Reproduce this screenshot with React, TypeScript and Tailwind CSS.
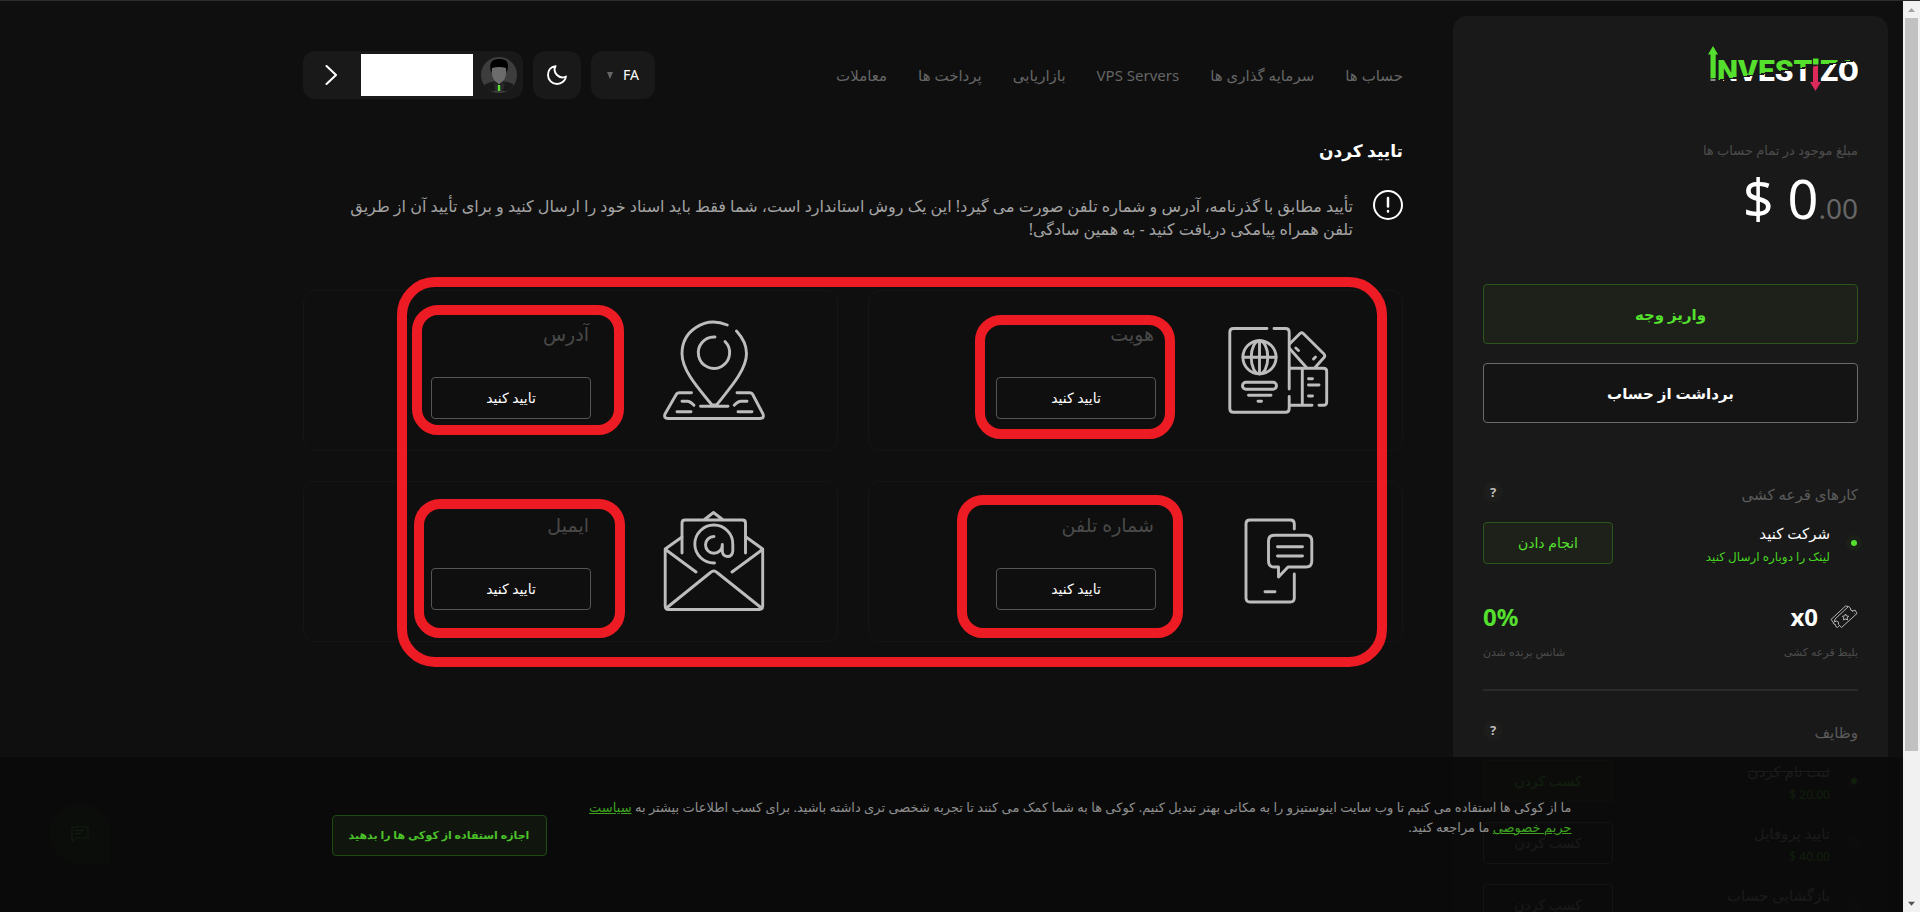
import type { ReactNode } from "react";

const navItems = ["حساب ها", "سرمایه گذاری ها", "VPS Servers", "بازاریابی", "پرداخت ها", "معاملات"];

const tasks = [
  { title: "ثبت نام کردن", reward: "$ 20.00", done: true },
  { title: "تایید پروفایل", reward: "$ 40.00", done: false },
  { title: "بازگشایی حساب", reward: "$ 20.00", done: false },
];

function Logo() {
  return (
    <svg width="150" height="46" viewBox="0 0 150 46" direction="ltr" role="img" aria-label="Investizo">
      <defs>
        <linearGradient id="logo-split" gradientUnits="userSpaceOnUse" x1="70" y1="24" x2="73.500" y2="48">
          <stop offset="0" stopColor="#55e02e" />
          <stop offset="0.040" stopColor="#55e02e" />
          <stop offset="0.040" stopColor="#191919" />
          <stop offset="0.100" stopColor="#191919" />
          <stop offset="0.100" stopColor="#fff" />
          <stop offset="1" stopColor="#fff" />
        </linearGradient>
      </defs>
      <g fontFamily="Roboto, sans-serif" fontWeight="900" fontSize="30" fill="url(#logo-split)">
        <text x="9" y="34.500">NVEST</text>
        <text x="112" y="34.500">ZO</text>
      </g>
      <path d="M105 12.500h5.500v6H105z" fill="#55e02e" />
      <path d="M2.500 33.500h5v1h-5z" fill="#fff" />
      <path d="M5 0L10 8.500H7.700V32L2.500 32.500V8.500H0Z" fill="#55e02e" />
      <path d="M105 20.500L110 19.500V36H113L107.500 45L102 36H105Z" fill="#dc2a5b" />
    </svg>
  );
}

function LineIcon({ children }: { children: ReactNode }) {
  return (
    <svg
      width="102"
      height="101"
      viewBox="0 0 102 101"
      fill="none"
      stroke="#bdbdbd"
      strokeWidth="2.900"
      strokeLinecap="round"
      strokeLinejoin="round"
      aria-hidden="true"
    >
      {children}
    </svg>
  );
}

function PassportIcon() {
  return (
    <LineIcon>
      <path d="M39 8.500H5.500Q1.800 8.500 1.800 12.200V88.500Q1.800 92.300 5.500 92.300H57.500Q61.200 92.300 61.200 88.500V76.500M61.200 69V12.200Q61.200 8.500 57.500 8.500H46" />
      <circle cx="31.500" cy="37.300" r="16.600" />
      <ellipse cx="31.500" cy="37.300" rx="8.300" ry="16.600" />
      <path d="M31.500 20.700V54M15 37.300H48" />
      <rect x="14.500" y="62.300" width="34" height="7" rx="3.500" />
      <path d="M20.500 75.200H43M30 81.200H33.500" />
      <path d="M62 23.500L72 13.500Q73.700 12 75.300 13.500L96 34Q97.500 36 96 37.500L87.500 47M62 29L78 47" />
      <path d="M67.800 28L70.500 30.500M85.500 39L87.500 37" />
      <path d="M62 48.300H95.500Q98.700 48.300 98.700 51.500V82Q98.700 85.300 95.500 85.300H91M84 85.300H62M74.300 48.300V85.300M80.500 58.700H84.500M80.500 65H91M80.500 76H84.500" />
    </LineIcon>
  );
}

function PinIcon() {
  return (
    <LineIcon>
      <path d="M64.300 5C41 -4.500 19 11.500 19 33.500C19 51 36 69 49 85H53.500C67 68 83.500 50 83.500 33.500C83.500 24 79 17 73.500 11" />
      <path d="M52 17A15.700 15.700 0 1 0 62 21.500" />
      <path d="M37.500 86.300H65M28.500 72.700H16.500Q14 72.700 12.900 75L2 94Q0.500 98.500 5 98.500H97Q101.500 98.500 100 94L90 75Q89 72.700 86.500 72.700H74" />
      <path d="M19 81.300H24.500Q27 81.300 31 85.300M71.200 85.300Q75 81.300 78 81.300H84M14 91.700H28M75 91.700H89" />
    </LineIcon>
  );
}

function PhoneIcon() {
  return (
    <LineIcon>
      <path d="M66.300 18V13Q66.300 9 62.300 9H22Q18 9 18 13V87Q18 91 22 91H62.300Q66.300 91 66.300 87V63" />
      <path d="M46.500 24.300H78Q83.800 24.300 83.800 30V50Q83.800 56 78 56H60L50.500 66V56H46.500Q40.500 56 40.500 50V30Q40.500 24.300 46.500 24.300Z" />
      <path d="M49.500 35.700H74.500M49.500 45H74.500M37 80.700H47" />
    </LineIcon>
  );
}

function MailIcon() {
  return (
    <LineIcon>
      <path d="M19 42V12Q19 9 22 9H79.500Q82.500 9 82.500 12V42M41.500 8.500L50.500 1.500L59.500 8.500" />
      <path d="M19 26L2.200 38V95Q2.200 98.500 5.500 98.500H96.500Q99.700 98.500 99.700 95V38L83 26" />
      <path d="M2.500 38.500L33 61M99.500 38.500L69 61M3.500 97L47.500 61.500Q50.800 58.500 54 61.500L98.500 97" />
      <path d="M51.500 52A19 19 0 1 1 69.800 33.500V40Q69.300 45.500 64.500 45.500Q59.500 45 59.300 40V33.500M51 25.500A8.400 8.400 0 1 0 59.300 34" />
    </LineIcon>
  );
}

function TicketIcon() {
  return (
    <svg width="28" height="24" viewBox="0 0 28 24" fill="none" stroke="#b5b5b5" strokeLinejoin="round" aria-hidden="true">
      <path d="M18.500 1.500L20.500 3Q20 6 23 6L25 5L27 8.500L11.500 22.500L8.500 19.500Q9.500 16.500 6.500 16L4.500 17L5 14Z" />
      <path d="M18.500 1.500L15.500 1L1 14.500L3 17Q3 19.500 5.500 19.500Q5 22 7.500 22.500L9 21" />
      <path d="M15.500 9L16.500 11L18.700 11.300L17.200 12.900L17.500 15L15.500 14L13.500 15L13.800 12.900L12.300 11.300L14.500 11Z" />
      <path d="M20.500 4.500L24.500 8.500" strokeDasharray="1 1.500" />
    </svg>
  );
}

function Avatar() {
  return (
    <svg width="36" height="36" viewBox="0 0 36 36" aria-hidden="true">
      <defs>
        <clipPath id="avatar-round">
          <circle cx="18" cy="18" r="18" />
        </clipPath>
      </defs>
      <g clipPath="url(#avatar-round)">
        <path d="M0 0h36v36H0z" fill="#3d3d3d" />
        <path d="M3 28Q8 25 12.500 24.500H24Q29 25 33 28V34H3Z" fill="#1a1a1a" />
        <path d="M12.500 24.500L18 29L24 24.500L22 34H14Z" fill="#292929" />
        <path d="M16.800 28h2.400v6h-2.400z" fill="#55e02e" />
        <path d="M9.500 13Q7.500 2 18 2Q29 1.500 26.500 13L25 16H11Z" fill="#000" />
        <path d="M11 11Q18 9 25 11Q26 20 22 24L18 27.500L14 24Q10 20 11 11Z" fill="#6c6c6c" />
      </g>
    </svg>
  );
}

function HelpButton() {
  return (
    <button type="button" className="h-5 w-5 rounded-full bg-[#1d1e1b] text-[13px] leading-5 font-bold text-[#bdbdbd]">
      ?
    </button>
  );
}

function Dot({ active }: { active?: boolean }) {
  return (
    <span className="-ms-1 flex h-4 w-4 items-center justify-center rounded-full bg-[#1b2119]">
      {active && <span className="h-1.5 w-1.5 rounded-full bg-[#55e02e]" />}
    </span>
  );
}

function Sidebar() {
  return (
    <aside className="mt-[15px] w-[435px] shrink-0 rounded-t-[14px] bg-[#191919] p-[30px]">
      <a href="#" className="block w-fit">
        <Logo />
      </a>
      <p className="mt-12 text-[13px] leading-5 text-[#4d4d4d]">مبلغ موجود در تمام حساب ها</p>
      <p dir="ltr" className="mt-2 text-right text-[54px] leading-[60px] text-white">
        $ 0<span className="text-[28px] leading-none text-[#666]">.00</span>
      </p>
      <div className="mt-14 flex flex-col gap-[19px]">
        <button type="button" className="h-[60px] rounded border border-[#2b571c] bg-[#1e211a] text-[15px] font-semibold text-[#55e02e]">
          واریز وجه
        </button>
        <button type="button" className="h-[60px] rounded border border-[#6b6b6b] bg-[#141414] text-[15px] font-semibold text-white">
          برداشت از حساب
        </button>
      </div>

      <div className="mt-[59px] flex h-[30px] items-start justify-between">
        <h2 className="text-[15px] leading-6 text-[#5c5c5c]">کارهای قرعه کشی</h2>
        <HelpButton />
      </div>
      <div className="mt-[10px] flex h-[42px] items-center">
        <Dot active />
        <div className="ms-4 flex-1 pt-1">
          <p className="text-[15px] leading-6 text-white">شرکت کنید</p>
          <a href="#" className="block text-xs leading-6 text-[#46d420]">لینک را دوباره ارسال کنید</a>
        </div>
        <button type="button" className="h-[42px] w-[130px] rounded border border-[#2b571c] bg-[#1e211a] text-sm text-[#55e02e]">
          انجام دادن
        </button>
      </div>

      <div className="mt-[38px] flex justify-between border-b-2 border-[#2a2a2a] pb-[27px]">
        <div>
          <p className="flex h-[30px] items-center gap-3 text-2xl font-bold text-white">
            <TicketIcon />
            <span dir="ltr">x0</span>
          </p>
          <p className="mt-[10px] text-[11px] leading-5 text-[#4d4d4d]">بلیط قرعه کشی</p>
        </div>
        <div className="text-end">
          <p dir="ltr" className="h-[30px] text-left text-2xl leading-[30px] font-bold text-[#55e02e]">0%</p>
          <p className="mt-[10px] text-[11px] leading-5 text-[#4d4d4d]">شانس برنده شدن</p>
        </div>
      </div>

      <div className="mt-[29px] flex h-[30px] items-start justify-between">
        <h2 className="text-[15px] leading-6 text-[#5c5c5c]">وظایف</h2>
        <HelpButton />
      </div>
      <ul className="mt-[10px] flex flex-col gap-5">
        {tasks.map((task) => (
          <li key={task.title} className="flex h-[42px] items-center">
            <Dot active={task.done} />
            <div className="ms-4 flex-1 pt-1">
              <p className={task.done ? "text-[15px] leading-6 text-[#aaa] line-through" : "text-[15px] leading-6 text-[#aaa]"}>
                {task.title}
              </p>
              <p dir="ltr" className="text-right text-xs leading-6 text-[#46d420]">{task.reward}</p>
            </div>
            <button
              type="button"
              className={
                task.done
                  ? "h-[42px] w-[130px] rounded border border-[#2b571c] bg-[#1e211a] text-sm text-[#55e02e]"
                  : "h-[42px] w-[130px] rounded border border-[#6b6b6b] bg-[#141414] text-sm text-[#aaa]"
              }
            >
              کسب کردن
            </button>
          </li>
        ))}
      </ul>
    </aside>
  );
}

function Header() {
  return (
    <header className="flex items-start justify-between">
      <nav className="flex gap-[31px] pt-3 text-[15px] leading-6">
        {navItems.map((item) => (
          <a key={item} href="#" className="text-[#666]">
            {item}
          </a>
        ))}
      </nav>
      <div className="flex gap-[10px]">
        <button type="button" className="flex h-12 w-16 items-center justify-center gap-[10px] rounded-xl bg-[#191919] text-sm text-white">
          FA
          <svg width="6" height="7" viewBox="0 0 6 7" fill="#666" aria-hidden="true">
            <path d="M0 0H6L3 7Z" />
          </svg>
        </button>
        <button type="button" aria-label="Dark mode" className="flex h-12 w-12 items-center justify-center rounded-xl bg-[#191919]">
          <svg width="20" height="20" viewBox="0 0 20 20" fill="none" stroke="#fff" strokeWidth="1.900" strokeLinejoin="round" aria-hidden="true">
            <path d="M8.500 1.200C3.500 1.700 1 5.500 1 10C1 15 5 19 10 19C14.500 19 18.500 15.500 19 11.500C16 13 12.500 12.500 10 10C7.500 7.500 7 4 8.500 1.200Z" />
          </svg>
        </button>
        <button type="button" aria-label="Account" className="flex h-12 w-[220px] items-center rounded-xl bg-[#191919] ps-[6px]">
          <Avatar />
          <span className="ms-2 h-[42px] w-28 bg-white" />
          <svg className="ms-6" width="12" height="20" viewBox="0 0 12 20" fill="none" stroke="#fff" strokeWidth="2" strokeLinecap="round" aria-hidden="true">
            <path d="M1.500 1L11 10L1.500 19" />
          </svg>
        </button>
      </div>
    </header>
  );
}

function VerifyCard({ title, icon, mark }: { title: string; icon: ReactNode; mark: string }) {
  return (
    <section className="relative flex h-[161px] rounded-xl border border-[#151515]">
      <div className="flex w-[246px] justify-center pt-[29px]">{icon}</div>
      <div className="pt-[29px]">
        <h3 className="ps-0.5 text-[19px] leading-7 text-[#4a4a4a]">{title}</h3>
        <button type="button" className="mt-[29px] h-[42px] w-40 rounded border border-[#555] text-sm text-white">
          تایید کنید
        </button>
      </div>
      <span className={`pointer-events-none absolute rounded-[26px] border-[10px] border-[#ed1c24] ${mark}`} />
    </section>
  );
}

function CookieBar() {
  return (
    <div className="absolute inset-x-0 bottom-0 flex h-[155px] justify-center bg-[#0a0a0a]/90">
      <div className="flex w-full max-w-[1240px] items-start justify-between">
        <p className="mt-10 w-[990px] text-[13px] leading-5 text-[#8f8f8f]">
          ما از کوکی ها استفاده می کنیم تا وب سایت اینوستیزو را به مکانی بهتر تبدیل کنیم. کوکی ها به شما کمک می کنند تا تجربه شخصی تری داشته باشید. برای کسب اطلاعات بیشتر به{" "}
          <a href="#" className="text-[#3da31f] underline">سیاست حریم خصوصی</a> ما مراجعه کنید.
        </p>
        <button type="button" className="mt-[58px] h-[41px] w-[215px] rounded border border-[#1f4a13] bg-[#10160d] text-[11px] font-semibold text-[#4cc22a]">
          اجازه استفاده از کوکی ها را بدهید
        </button>
      </div>
    </div>
  );
}

function Scrollbar() {
  return (
    <div className="flex w-[17px] flex-col items-center justify-between bg-[#f1f1f1]" aria-hidden="true">
      <div className="flex h-full flex-col items-center">
        <svg width="17" height="17" viewBox="0 0 17 17" fill="#a3a3a3">
          <path d="M5 11L8.500 7L12 11Z" />
        </svg>
        <div className="h-[82%] w-[13px] bg-[#c1c1c1]" />
      </div>
      <svg width="17" height="17" viewBox="0 0 17 17" fill="#505050">
        <path d="M5 7L8.500 11L12 7Z" />
      </svg>
    </div>
  );
}

export default function App() {
  return (
    <div className="flex h-screen overflow-hidden border-t border-[#2c2c2c] bg-[#0f0f0f] font-['Noto_Sans','DejaVu_Sans',sans-serif]">
      <div className="relative flex-1 overflow-hidden">
        <div dir="rtl" className="flex ps-[15px]">
          <Sidebar />
          <main className="ms-[50px] w-full max-w-[1100px] pt-[50px]">
            <Header />
            <h1 className="mt-9 text-[17px] leading-8 font-semibold text-white">تایید کردن</h1>
            <div className="mt-[23px] flex gap-5">
              <svg width="30" height="30" viewBox="0 0 30 30" fill="none" stroke="#fff" strokeWidth="2" strokeLinecap="round" className="shrink-0" aria-hidden="true">
                <circle cx="15" cy="15" r="14" />
                <path d="M15 8V16.500M15 21V21.500" strokeWidth="2.500" />
              </svg>
              <p className="max-w-[1025px] pt-[5px] text-base leading-[23px] text-[#a3a3a3]">
                تأیید مطابق با گذرنامه، آدرس و شماره تلفن صورت می گیرد! این یک روش استاندارد است، شما فقط باید اسناد خود را ارسال کنید و برای تأیید آن از طریق تلفن همراه پیامکی دریافت کنید - به همین سادگی!
              </p>
            </div>
            <div className="relative mt-[49px] grid grid-cols-2 gap-[30px]">
              <VerifyCard title="هویت" icon={<PassportIcon />} mark="top-6 left-[106px] h-[124px] w-[200px]" />
              <VerifyCard title="آدرس" icon={<PinIcon />} mark="top-[14px] left-[108px] h-[130px] w-[212px]" />
              <VerifyCard title="شماره تلفن" icon={<PhoneIcon />} mark="top-[13px] left-[88px] h-[143px] w-[226px]" />
              <VerifyCard title="ایمیل" icon={<MailIcon />} mark="top-[17px] left-[110px] h-[139px] w-[211px]" />
              <span className="pointer-events-none absolute -top-[13px] -bottom-[25px] left-[94px] right-4 rounded-[38px] border-[10px] border-[#ed1c24]" />
            </div>
          </main>
        </div>
        <button type="button" aria-label="Chat" className="absolute bottom-12 left-[50px] flex h-[60px] w-[60px] items-center justify-center rounded-full rounded-br-none bg-[#1a3013]">
          <svg width="18" height="16" viewBox="0 0 18 16" fill="none" stroke="#55e02e" strokeLinejoin="round" aria-hidden="true">
            <path d="M1 15.500V2Q1 1 2 1H16Q17 1 17 2V11Q17 12 16 12H5L1 15.500ZM4 4.500H13M4 7.500H10" />
          </svg>
        </button>
        <div dir="rtl">
          <CookieBar />
        </div>
      </div>
      <Scrollbar />
    </div>
  );
}
